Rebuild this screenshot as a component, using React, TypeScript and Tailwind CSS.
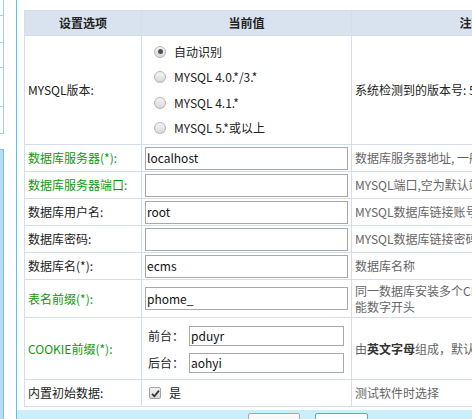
import React from "react";

const B = "border-[#d3deec]";

function Radio({ checked }: { checked?: boolean }) {
  return (
    <span className="w-[12px] h-[12px] rounded-full border border-[#b4b4b4] bg-linear-to-b from-[#f6f6f6] to-[#d9d9d9] flex items-center justify-center shrink-0">
      {checked && <span className="w-[5px] h-[5px] rounded-full bg-[#505050]" />}
    </span>
  );
}

function Cell({ children, className = "" }: { children?: React.ReactNode; className?: string }) {
  return <div className={`border-r border-b ${B} flex items-center ${className}`}>{children}</div>;
}

function TextInput({ value, w = "w-[203px]", h = "h-[23px]" }: { value: string; w?: string; h?: string }) {
  return (
    <div className={`${w} ${h} border border-[#a9a9a9] bg-white flex items-center pl-[1px] text-[12px] text-[#111] leading-none`}>
      {value}
    </div>
  );
}

export default function App() {
  const green = "text-[#0f990f]";
  const dark = "text-[#222]";
  const gray = "text-[#666]";
  return (
    <div className="w-screen h-screen overflow-hidden bg-white flex font-['Noto_Sans_CJK_SC',sans-serif] text-[12px] leading-[16px]">
      {/* left sidebar */}
      <div className="w-[17px] shrink-0 border-r border-[#5bc0ea] flex flex-col">
        <div className="w-[4px] h-[134px] border-r border-b border-[#9fd0ea] flex flex-col">
          <div className="h-[16px] border-b border-[#9fd0ea]" />
          <div className="h-[27px] border-b border-[#9fd0ea]" />
          <div className="h-[25px] border-b border-[#9fd0ea]" />
          <div className="h-[39px] border-b border-[#9fd0ea]" />
        </div>
        <div className="mt-[15px] w-[4px] flex-1 border-t border-r border-[#7cbfe3] bg-[#b5dcf0]" />
      </div>

      {/* main */}
      <div className="flex-1 min-w-0 flex flex-col overflow-hidden">
        <div className="pt-[10px] pl-[7px]">
          <div className={`grid grid-cols-[117px_210px_240px] w-[568px] border-l border-t ${B}`}>
            {/* header */}
            <Cell className={`h-[25px] justify-center bg-[#d9e3f0] font-bold ${dark}`}>设置选项</Cell>
            <Cell className={`h-[25px] justify-center bg-[#d9e3f0] font-bold ${dark}`}>当前值</Cell>
            <Cell className={`h-[25px] justify-center bg-[#d9e3f0] font-bold ${dark}`}>注释</Cell>

            {/* MYSQL version */}
            <Cell className={`h-[109px] pl-[3px] ${dark}`}>MYSQL版本:</Cell>
            <Cell className={`h-[109px] pl-[12px] ${dark}`}>
              <div className="flex flex-col">
                {[
                  ["自动识别", true],
                  ["MYSQL 4.0.*/3.*", false],
                  ["MYSQL 4.1.*", false],
                  ["MYSQL 5.*或以上", false],
                ].map(([t, c]) => (
                  <div key={t as string} className="h-[25.5px] flex items-center gap-[8px]">
                    <Radio checked={c as boolean} />
                    <span className="whitespace-nowrap">{t as string}</span>
                  </div>
                ))}
              </div>
            </Cell>
            <Cell className={`h-[109px] pl-[3px] whitespace-nowrap ${dark}`}>
              系统检测到的版本号:&nbsp;5.5
            </Cell>

            {/* server */}
            <Cell className={`h-[27px] pl-[3px] ${green}`}>数据库服务器(*):</Cell>
            <Cell className="h-[27px] pl-[3px]"><TextInput value="localhost" /></Cell>
            <Cell className={`h-[27px] pl-[3px] whitespace-nowrap ${gray}`}>数据库服务器地址, 一般为localhost</Cell>

            {/* port */}
            <Cell className={`h-[27px] pl-[3px] whitespace-nowrap ${green}`}>数据库服务器端口:</Cell>
            <Cell className="h-[27px] pl-[3px]"><TextInput value="" /></Cell>
            <Cell className={`h-[27px] pl-[3px] whitespace-nowrap ${gray}`}>MYSQL端口,空为默认端口, 一般为空</Cell>

            {/* user */}
            <Cell className={`h-[27px] pl-[3px] ${dark}`}>数据库用户名:</Cell>
            <Cell className="h-[27px] pl-[3px]"><TextInput value="root" /></Cell>
            <Cell className={`h-[27px] pl-[3px] whitespace-nowrap ${gray}`}>MYSQL数据库链接账号</Cell>

            {/* password */}
            <Cell className={`h-[27px] pl-[3px] ${dark}`}>数据库密码:</Cell>
            <Cell className="h-[27px] pl-[3px]"><TextInput value="" /></Cell>
            <Cell className={`h-[27px] pl-[3px] whitespace-nowrap ${gray}`}>MYSQL数据库链接密码</Cell>

            {/* db name */}
            <Cell className={`h-[27px] pl-[3px] ${dark}`}>数据库名(*):</Cell>
            <Cell className="h-[27px] pl-[3px]"><TextInput value="ecms" /></Cell>
            <Cell className={`h-[27px] pl-[3px] whitespace-nowrap ${gray}`}>数据库名称</Cell>

            {/* prefix */}
            <Cell className={`h-[38px] pl-[3px] ${green}`}>表名前缀(*):</Cell>
            <Cell className="h-[38px] pl-[3px]"><TextInput value="phome_" /></Cell>
            <Cell className={`h-[38px] pl-[3px] whitespace-nowrap ${gray}`}>
              <div className="flex flex-col">
                <span className="leading-[16px]">同一数据库安装多个CMS时可改变默认，不</span>
                <span className="leading-[16px]">能数字开头</span>
              </div>
            </Cell>

            {/* cookie */}
            <Cell className={`h-[62px] pl-[3px] ${green}`}>COOKIE前缀(*):</Cell>
            <Cell className={`h-[62px] pl-[6px] ${dark}`}>
              <div className="flex flex-col gap-[7px] pt-[2px]">
                <div className="flex items-center gap-[5px]">
                  <span className="whitespace-nowrap">前台：</span>
                  <TextInput value="pduyr" w="w-[155px]" h="h-[20px]" />
                </div>
                <div className="flex items-center gap-[5px]">
                  <span className="whitespace-nowrap">后台：</span>
                  <TextInput value="aohyi" w="w-[155px]" h="h-[20px]" />
                </div>
              </div>
            </Cell>
            <Cell className={`h-[62px] pl-[3px] whitespace-nowrap ${gray}`}>
              由<span className="text-[#333] font-bold">英文字母</span>组成，默认即可
            </Cell>

            {/* init data */}
            <Cell className={`h-[27px] pl-[3px] ${dark}`}>内置初始数据:</Cell>
            <Cell className={`h-[27px] pl-[7px] ${dark}`}>
              <div className="flex items-center gap-[8px]">
                <span className="w-[12px] h-[12px] rounded-[2px] border border-[#a3a3a3] bg-linear-to-b from-[#f4f4f4] to-[#d6d6d6] flex items-center justify-center">
                  <svg width="9" height="9" viewBox="0 0 9 9">
                    <path d="M1 4.8 L3.4 7.2 L8 1.6" fill="none" stroke="#333" strokeWidth="1.8" />
                  </svg>
                </span>
                <span>是</span>
              </div>
            </Cell>
            <Cell className={`h-[27px] pl-[3px] whitespace-nowrap ${gray}`}>测试软件时选择</Cell>
          </div>
        </div>

        {/* bottom bar */}
        <div className="mt-[3px] flex-1 bg-[#c9effc] pl-[231px] pt-[3px] flex gap-[15px]">
          <div className="w-[52px] h-[24px] border border-[#a8a8a8] rounded-[2px] bg-linear-to-b from-[#fafafa] to-[#ececec]" />
          <div className="w-[53px] h-[24px] border border-[#6a9fd8] rounded-[2px] bg-linear-to-b from-[#fbfdff] to-[#eef4fb]" />
        </div>
      </div>
    </div>
  );
}
